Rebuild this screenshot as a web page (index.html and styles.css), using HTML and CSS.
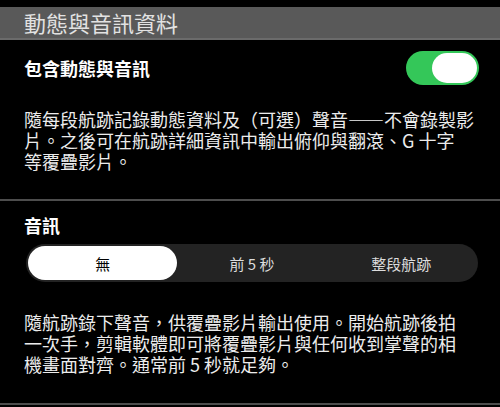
FILE: index.html
```html
<!DOCTYPE html>
<html lang="zh-Hant">

<head>
    <meta charset="UTF-8">
    <meta name="viewport" content="width=device-width, initial-scale=1.0">
    <title>動態與音訊資料</title>
    <link rel="stylesheet" href="styles.css">
</head>

<body>
    <div class="wrapper">
        <header class="section-head">動態與音訊資料</header>
        <main>
            <section class="group">
                <div class="row">
                    <span class="row-label">包含動態與音訊</span>
                    <button class="toggle on" type="button" aria-pressed="true"><span class="knob"></span></button>
                </div>
                <p class="desc">隨每段航跡記錄動態資料及（可選）聲音——不會錄製影<br>片。之後可在航跡詳細資訊中輸出俯仰與翻滾、G 十字<br>等覆疊影片。</p>
            </section>
            <section class="group">
                <div class="group-title">音訊</div>
                <ul class="segments">
                    <li class="active">無</li>
                    <li>前 5 秒</li>
                    <li>整段航跡</li>
                </ul>
                <p class="desc">隨航跡錄下聲音，供覆疊影片輸出使用。開始航跡後拍<br>一次手，剪輯軟體即可將覆疊影片與任何收到掌聲的相<br>機畫面對齊。通常前 5 秒就足夠。</p>
            </section>
        </main>
    </div>
</body>

</html>
```

FILE: styles.css
```css
* {
    box-sizing: border-box;
}

body {
    margin: 0;
    background-color: #000;
    color: #ececec;
    font-family: "Noto Sans CJK TC", "Noto Sans", sans-serif;
}

ul {
    list-style: none;
    margin: 0;
    padding: 0;
}

.wrapper {
    padding-top: 7px;
}

.section-head {
    height: 33px;
    padding: 0 24px;
    background-color: #595959;
    border-bottom: 2px solid #6b6b6b;
    color: #e2e2e2;
    font-size: 22px;
    line-height: 31px;
}

.group {
    padding: 0 20px 0 24px;
    border-bottom: 2px solid #4d4d4d;
}

.group>.row {
    display: flex;
    justify-content: space-between;
    align-items: center;
    padding-top: 11px;
    padding-right: 1px;
}

.row-label,
.group-title {
    color: #fff;
    font-size: 18px;
    font-weight: bold;
}

.toggle {
    display: flex;
    justify-content: flex-end;
    align-items: center;
    width: 73px;
    height: 34px;
    padding: 0 2px;
    border: none;
    border-radius: 17px;
    background-color: #34c759;
}

.toggle>.knob {
    width: 45px;
    height: 30px;
    border-radius: 15px;
    background-color: #fff;
}

.desc {
    margin: 24px -5px 27px 0;
    font-size: 18px;
    line-height: 21px;
}

.group-title {
    margin-top: 12px;
    line-height: 24px;
}

.segments {
    display: flex;
    margin: 7px 2px 0 2px;
    padding: 2px;
    height: 38px;
    border-radius: 19px;
    background-color: #232323;
}

.segments>li {
    flex: 1;
    display: flex;
    justify-content: center;
    align-items: center;
    border-radius: 17px;
    color: #dcdcdc;
    font-size: 15px;
}

.segments>li.active {
    background-color: #fff;
    color: #000;
}

.segments+.desc {
    margin: 30px -5px 28px 0;
}
```
